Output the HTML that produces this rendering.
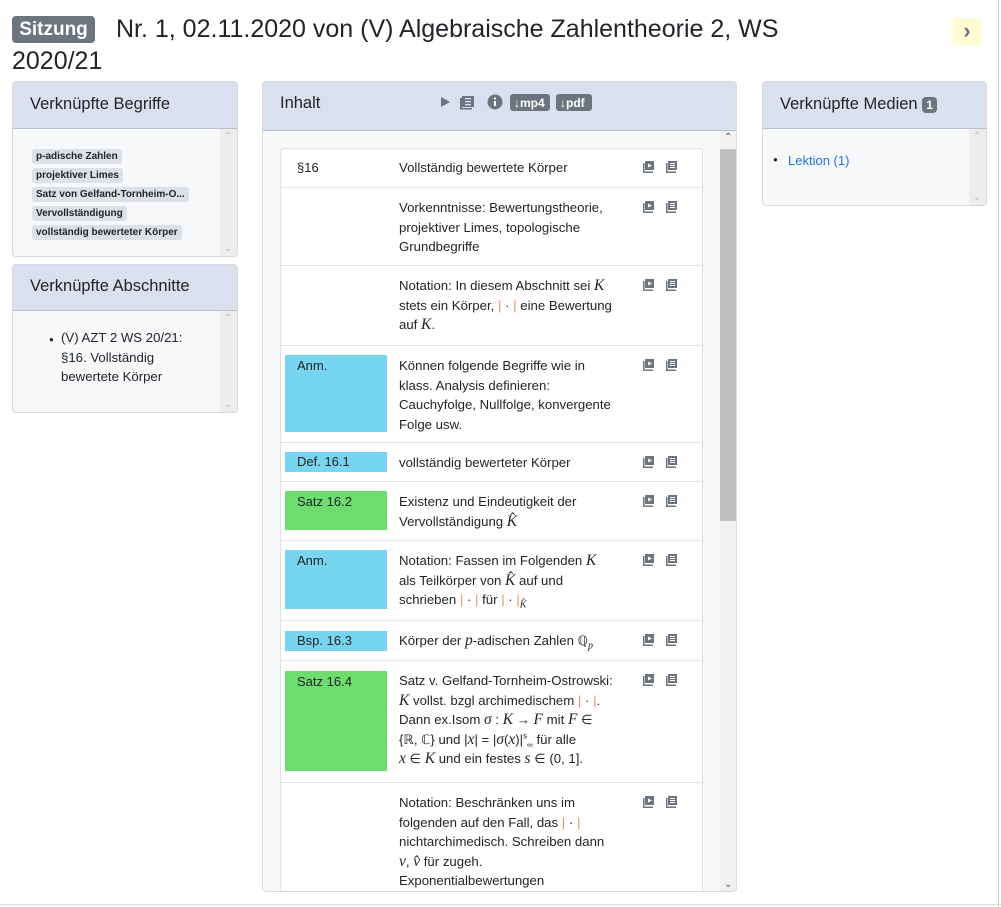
<!DOCTYPE html>
<html><head><meta charset="utf-8"><style>
*{box-sizing:border-box;margin:0;padding:0}
body{width:1001px;height:907px;overflow:hidden;background:#fff;font-family:"Liberation Sans",sans-serif;color:#212529;position:relative}
.abs{position:absolute}
.badge{background:#6c757d;color:#fff;font-weight:bold;border-radius:4px}
.card{position:absolute;border:1px solid #d6d9de;border-radius:4px;background:#f7f8fa;overflow:hidden}
.ch{background:#dae0ee;border-bottom:1px solid #b8c0d0;font-size:16.5px;padding-left:17px;position:absolute;left:0;right:0;top:0}
.sb{position:absolute;right:0;width:17px;background:#ededed}
.arr{position:absolute;left:4px;color:#bbb;font-size:10px}
.tag{position:absolute;left:19px;background:#dde0e5;font-size:10px;font-weight:bold;padding:1px 4px;border-radius:3px;line-height:13px}
.row{position:absolute;left:0;right:0;border-top:1px solid #dee2e6}
.lb{position:absolute;left:4px;width:102px;font-size:13px;padding:3px 12px}
.tx{position:absolute;left:118px;width:240px;font-size:13.2px;line-height:19.5px;white-space:nowrap}
.ic{position:absolute;top:13px;left:361px;width:40px;height:12px}
.m{font-family:"Liberation Serif",serif;font-style:italic;font-size:15.5px;line-height:1}
.p{color:#e8935a}
sub,sup{line-height:0}
</style></head><body>
<div class="abs" style="right:2px;top:0;width:1px;height:907px;background:#ccc"></div>
<div class="abs" style="left:0;top:904px;width:1001px;height:1px;background:#ddd"></div>
<div class="abs badge" style="left:12px;top:16px;width:83px;height:27px;font-size:19px;line-height:28px;text-align:center">Sitzung</div>
<div class="abs" style="left:12px;top:13px;width:800px;font-size:25px;line-height:32px;text-indent:104px">Nr. 1, 02.11.2020 von (V) Algebraische Zahlentheorie 2, WS 2020/21</div>
<div class="abs" style="left:953px;top:18px;width:28px;height:27px;background:#fefcd0;color:#6c757d;font-size:22px;text-align:center;line-height:26px;font-weight:bold">&#x203A;</div>

<div class="card" style="left:12px;top:81px;width:226px;height:176px">
<div class="ch" style="height:47px;line-height:44px">Verknüpfte Begriffe</div>
<div class="sb" style="top:47px;bottom:0"><span class="arr" style="top:2px">&#8963;</span><span class="arr" style="bottom:2px">&#8964;</span></div>
<div class="tag" style="top:67px">p-adische Zahlen</div>
<div class="tag" style="top:86px">projektiver Limes</div>
<div class="tag" style="top:105px">Satz von Gelfand-Tornheim-O...</div>
<div class="tag" style="top:124px">Vervollständigung</div>
<div class="tag" style="top:143px">vollständig bewerteter Körper</div>
</div>

<div class="card" style="left:12px;top:264px;width:226px;height:149px">
<div class="ch" style="height:46px;line-height:42px">Verknüpfte Abschnitte</div>
<div class="sb" style="top:46px;bottom:0"><span class="arr" style="top:2px">&#8963;</span><span class="arr" style="bottom:2px">&#8964;</span></div>
<div class="abs" style="left:36px;top:70px;font-size:8px">&#9679;</div>
<div class="abs" style="left:48px;top:63px;width:140px;font-size:13.2px;line-height:19.5px">(V) AZT 2 WS 20/21: §16. Vollständig bewertete Körper</div>
</div>

<div class="card" style="left:762px;top:81px;width:225px;height:125px">
<div class="ch" style="height:47px;line-height:44px">Verknüpfte Medien <span class="badge" style="font-size:12px;padding:1px 4px">1</span></div>
<div class="sb" style="top:47px;bottom:0"><span class="arr" style="top:2px">&#8963;</span><span class="arr" style="bottom:2px">&#8964;</span></div>
<div class="abs" style="left:10px;top:73px;font-size:8px">&#9679;</div>
<div class="abs" style="left:25px;top:71px;font-size:13px;color:#1a73e8">Lektion (1)</div>
</div>

<div class="card" style="left:262px;top:81px;width:475px;height:811px">
<div class="ch" style="height:49px;line-height:42px">Inhalt
<svg class="abs" style="left:176px;top:12px" width="160" height="18" viewBox="0 0 160 18">
<path d="M2 3 L11 8 L2 13Z" fill="#6c757d"/>
<rect x="23" y="2" width="12" height="11" fill="#6c757d"/><rect x="21" y="4" width="2" height="11" fill="#6c757d"/><rect x="21" y="14" width="12" height="1.5" fill="#6c757d"/>
<rect x="26" y="4" width="6" height="1.3" fill="#dae0ee"/><rect x="26" y="7" width="6" height="1.3" fill="#dae0ee"/><rect x="26" y="10" width="6" height="1.3" fill="#dae0ee"/>
<circle cx="56" cy="8" r="7.5" fill="#6c757d"/><rect x="55" y="7" width="2" height="5" fill="#fff"/><circle cx="56" cy="4.5" r="1.1" fill="#fff"/>
<rect x="71" y="0" width="40" height="17" rx="3" fill="#6c757d"/><text x="75" y="13" fill="#fff" font-size="12" font-weight="bold" font-family="Liberation Sans">↓mp4</text>
<rect x="117" y="0" width="36" height="17" rx="3" fill="#6c757d"/><text x="121" y="13" fill="#fff" font-size="12" font-weight="bold" font-family="Liberation Sans">↓pdf</text>
</svg></div>
<div class="sb" style="top:49px;bottom:0;width:16px;background:#f1f1f1"><div class="abs" style="left:0;top:18px;width:16px;height:372px;background:#c1c1c1"></div><span class="arr" style="top:1px;color:#555">&#8963;</span><span class="arr" style="bottom:1px;color:#555">&#8964;</span></div>
<div class="abs" style="left:17px;top:66px;width:423px;height:760px;background:#fff;border:1px solid #dee2e6;border-radius:4px;overflow:hidden">
</div>
</div>

<div class="abs" style="left:281px;top:148px;width:421px;height:742px;overflow:hidden" id="L">
<div class="row" style="top:0;border:0;height:40px"><div class="lb" style="top:9px">§16</div><div class="tx" style="top:10px">Vollständig bewertete Körper</div><svg class="ic"><use href="#i"/></svg></div>
<div class="row" style="top:39px"><div class="tx" style="top:10px">Vorkenntnisse: Bewertungstheorie,<br>projektiver Limes, topologische<br>Grundbegriffe</div><svg class="ic"><use href="#i"/></svg></div>
<div class="row" style="top:117px"><div class="tx" style="top:10px">Notation: In diesem Abschnitt sei <span class="m">K</span><br>stets ein Körper, <span class="p">|</span> · <span class="p">|</span> eine Bewertung<br>auf <span class="m">K</span>.</div><svg class="ic"><use href="#i"/></svg></div>
<div class="row" style="top:197px"><div class="lb" style="top:9px;height:77px;background:#77d5ef">Anm.</div><div class="tx" style="top:10px">Können folgende Begriffe wie in<br>klass. Analysis definieren:<br>Cauchyfolge, Nullfolge, konvergente<br>Folge usw.</div><svg class="ic"><use href="#i"/></svg></div>
<div class="row" style="top:294px"><div class="lb" style="top:9px;height:20px;padding-top:2px;background:#77d5ef">Def. 16.1</div><div class="tx" style="top:10px">vollständig bewerteter Körper</div><svg class="ic"><use href="#i"/></svg></div>
<div class="row" style="top:333px"><div class="lb" style="top:9px;height:39px;background:#6fdc6f">Satz 16.2</div><div class="tx" style="top:10px">Existenz und Eindeutigkeit der<br>Vervollständigung <span class="m">K̂</span></div><svg class="ic"><use href="#i"/></svg></div>
<div class="row" style="top:392px"><div class="lb" style="top:9px;height:59px;background:#77d5ef">Anm.</div><div class="tx" style="top:10px">Notation: Fassen im Folgenden <span class="m">K</span><br>als Teilkörper von <span class="m">K̂</span> auf und<br>schrieben <span class="p">|</span> · <span class="p">|</span> für <span class="p">|</span> · <span class="p">|</span><sub class="m" style="font-size:10px">K̂</sub></div><svg class="ic"><use href="#i"/></svg></div>
<div class="row" style="top:472px"><div class="lb" style="top:10px;height:20px;padding-top:2px;background:#77d5ef">Bsp. 16.3</div><div class="tx" style="top:10px">Körper der <span class="m">p</span>-adischen Zahlen ℚ<sub class="m" style="font-size:10px">p</sub></div><svg class="ic"><use href="#i"/></svg></div>
<div class="row" style="top:512px"><div class="lb" style="top:10px;height:100px;background:#6fdc6f">Satz 16.4</div><div class="tx" style="top:10px">Satz v. Gelfand-Tornheim-Ostrowski:<br><span class="m">K</span> vollst. bzgl archimedischem <span class="p">|</span> · <span class="p">|</span>.<br>Dann ex.Isom <span class="m">σ</span> : <span class="m">K</span> → <span class="m">F</span> mit <span class="m">F</span> ∈<br>{ℝ, ℂ} und |<span class="m">x</span>| = |<span class="m">σ</span>(<span class="m">x</span>)|<sup style="font-size:8px">s</sup><sub style="font-size:8px">∞</sub> für alle<br><span class="m">x</span> ∈ <span class="m">K</span> und ein festes <span class="m">s</span> ∈ (0, 1].</div><svg class="ic"><use href="#i"/></svg></div>
<div class="row" style="top:634px"><div class="tx" style="top:10px">Notation: Beschränken uns im<br>folgenden auf den Fall, das <span class="p">|</span> · <span class="p">|</span><br>nichtarchimedisch. Schreiben dann<br><span class="m">v</span>, <span class="m">v̂</span> für zugeh.<br>Exponentialbewertungen</div><svg class="ic"><use href="#i"/></svg></div>
</div>
<svg width="0" height="0" style="position:absolute"><defs><g id="i" fill="#6c757d">
<rect x="3" y="0" width="9" height="9"/><rect x="1" y="2" width="1.5" height="10"/><rect x="1" y="10.5" width="10" height="1.5"/><path d="M6 2.5 L10 4.5 L6 6.5Z" fill="#fff"/>
<rect x="26" y="0" width="9" height="9"/><rect x="24" y="2" width="1.5" height="10"/><rect x="24" y="10.5" width="10" height="1.5"/>
<rect x="28" y="2" width="5" height="1" fill="#fff"/><rect x="28" y="4" width="5" height="1" fill="#fff"/><rect x="28" y="6" width="5" height="1" fill="#fff"/>
</g></defs></svg>
</body></html>
